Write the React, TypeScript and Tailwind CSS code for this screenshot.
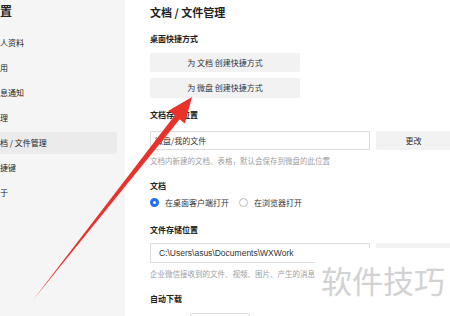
import React from "react";

const cjk = { fontFamily: '"Noto Sans CJK SC", "Noto Sans", sans-serif' };

const menu = ["个人资料", "通用", "消息通知", "管理", "文档 / 文件管理", "快捷键", "关于"];

export default function App() {
  return (
    <div className="relative flex w-[450px] h-[316px] overflow-hidden bg-white text-[#222]" style={cjk}>
      {/* 左侧菜单 */}
      <aside className="w-[125px] shrink-0 bg-[#f5f5f5] overflow-hidden">
        <h2 className="ml-[-12px] pt-[4px] text-[12px] leading-[14px] font-bold">设置</h2>
        <ul className="ml-[-20px] w-[137px] mt-[14px] flex flex-col gap-[3px]">
          {menu.map((m) => (
            <li
              key={m}
              className={
                "h-[22px] shrink-0 pl-[12px] flex items-center text-[8px] rounded-[3px] " +
                (m === "文档 / 文件管理" ? "bg-[#ebebeb]" : "")
              }
            >
              {m}
            </li>
          ))}
        </ul>
      </aside>

      {/* 右侧内容 */}
      <main className="flex-1 pl-[25px] pt-[5px]">
        <h1 className="text-[11px] leading-[14px] font-bold">文档 / 文件管理</h1>

        <div className="mt-[14px] text-[8px] leading-[11px] font-bold">桌面快捷方式</div>
        <button className="block mt-[9px] w-[150px] h-[19px] bg-[#f2f2f2] rounded-[2px] text-[8px] text-[#333]">
          为 文档 创建快捷方式
        </button>
        <button className="block mt-[6px] w-[150px] h-[20px] bg-[#f2f2f2] rounded-[2px] text-[8px] text-[#333]">
          为 微盘 创建快捷方式
        </button>

        <div className="mt-[11px] text-[8px] leading-[11px] font-bold">文档存储位置</div>
        <div className="mt-[11px] flex gap-[6px]">
          <div className="w-[220px] h-[19px] border border-[#dcdcdc] bg-white pl-[4px] flex items-center text-[8px] text-[#333]">
            微盘/我的文件
          </div>
          <button className="w-[90px] h-[19px] bg-[#f2f2f2] rounded-[2px] text-[8px] text-[#333] pr-[15px]">更改</button>
        </div>
        <div className="mt-[5px] text-[7.5px] leading-[11px] text-[#a0a0a0]">
          文档内新建的文档、表格，默认会保存到微盘的此位置
        </div>

        <div className="mt-[14px] text-[8px] leading-[11px] font-bold">文档</div>
        <div className="mt-[6px] flex items-center text-[8px] leading-[11px] text-[#333]">
          <span className="w-[9px] h-[9px] rounded-full border-[3px] border-[#1f6ff2] bg-white" />
          <span className="ml-[6px]">在桌面客户端打开</span>
          <span className="ml-[10px] w-[9px] h-[9px] rounded-full border border-[#bdbdbd] bg-white" />
          <span className="ml-[6px]">在浏览器打开</span>
        </div>

        <div className="mt-[16px] text-[8px] leading-[11px] font-bold">文件存储位置</div>
        <div className="mt-[8px] flex gap-[6px]">
          <div
            className="w-[220px] h-[20px] border border-[#dcdcdc] bg-white pl-[8px] flex items-center text-[8.5px] text-[#333]"
            style={{ fontFamily: '"Liberation Sans", Arial, sans-serif' }}
          >
            C:\Users\asus\Documents\WXWork
          </div>
          <button className="w-[90px] h-[20px] bg-[#f2f2f2] rounded-[2px] text-[8px] text-[#333]">更改</button>
        </div>
        <div className="mt-[5px] text-[7.5px] leading-[11px] text-[#a0a0a0] whitespace-nowrap">
          企业微信接收到的文件、视频、图片、产生的消息
        </div>

        <div className="mt-[14px] text-[8px] leading-[11px] font-bold">自动下载</div>
        <div className="mt-[9px] ml-[40px] w-[60px] h-[20px] border border-[#dcdcdc] rounded-[2px]" />
      </main>

      {/* 水印 */}
      <div className="absolute left-[315px] top-[248px] w-[135px] h-[68px] bg-white pl-[6px] pt-[16px]">
        <span className="text-[31px] leading-[31px] text-[#d2d2d2] whitespace-nowrap">软件技巧</span>
      </div>

      {/* 红色箭头 */}
      <svg className="absolute left-0 top-0 pointer-events-none" width="450" height="316" viewBox="0 0 450 316">
        <polygon points="33,300 174.8,115.2 179.9,119.1" fill="#e8332c" />
        <polygon points="192,97 168.5,110.8 184.9,123.5" fill="#e8332c" />
      </svg>
    </div>
  );
}
